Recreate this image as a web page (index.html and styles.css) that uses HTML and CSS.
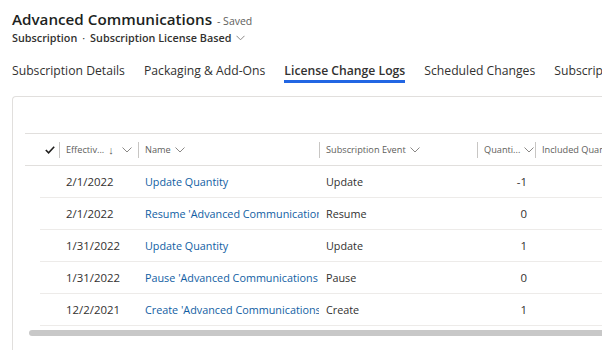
FILE: index.html
```html
<!DOCTYPE html>
<html lang="en">
<head>
    <meta charset="UTF-8">
    <meta name="viewport" content="width=device-width, initial-scale=1.0">
    <title>Advanced Communications</title>
    <link rel="stylesheet" href="styles.css">
</head>
<body>

    <div class="page-header">
        <h1 class="title">Advanced Communications <span class="saved">- Saved</span></h1>
        <div class="breadcrumb">
            <span>Subscription</span>
            <span class="dot">·</span>
            <span>Subscription License Based</span>
            <svg class="chev" width="9" height="6" viewBox="0 0 9 6"><path d="M0.5 0.8 L4.5 4.8 L8.5 0.8" fill="none" stroke="#8a8886" stroke-width="1"/></svg>
        </div>
    </div>

    <nav class="tabs">
        <a class="tab">Subscription Details</a>
        <a class="tab">Packaging &amp; Add-Ons</a>
        <a class="tab active">License Change Logs</a>
        <a class="tab">Scheduled Changes</a>
        <a class="tab">Subscription Products</a>
    </nav>

    <div class="panel">
        <div class="grid">
            <div class="grid-head">
                <div class="col-check">
                    <svg width="10" height="8" viewBox="0 0 10 8"><path d="M0.8 4 L3.6 6.8 L9.2 0.8" fill="none" stroke="#201f1e" stroke-width="1.6"/></svg>
                </div>
                <div class="th col-date">Effectiv... <span class="arrow">↓</span>
                    <svg class="hchev" width="10" height="6" viewBox="0 0 10 6"><path d="M0.5 0.5 L5 5 L9.5 0.5" fill="none" stroke="#8a8886"/></svg>
                </div>
                <div class="th col-name">Name
                    <svg class="hchev" width="10" height="6" viewBox="0 0 10 6"><path d="M0.5 0.5 L5 5 L9.5 0.5" fill="none" stroke="#8a8886"/></svg>
                </div>
                <div class="th col-event">Subscription Event
                    <svg class="hchev" width="10" height="6" viewBox="0 0 10 6"><path d="M0.5 0.5 L5 5 L9.5 0.5" fill="none" stroke="#8a8886"/></svg>
                </div>
                <div class="th col-qty">Quanti...
                    <svg class="hchev" width="10" height="6" viewBox="0 0 10 6"><path d="M0.5 0.5 L5 5 L9.5 0.5" fill="none" stroke="#8a8886"/></svg>
                </div>
                <div class="th col-inc">Included Quantity</div>
            </div>

            <div class="row">
                <div class="cell-gap"></div>
                <div class="td col-date">2/1/2022</div>
                <div class="td col-name"><a>Update Quantity</a></div>
                <div class="td col-event">Update</div>
                <div class="td col-qty">-1</div>
                <div class="td col-inc"></div>
            </div>
            <div class="row">
                <div class="cell-gap"></div>
                <div class="td col-date">2/1/2022</div>
                <div class="td col-name"><a>Resume 'Advanced Communications (Monthly)'</a></div>
                <div class="td col-event">Resume</div>
                <div class="td col-qty">0</div>
                <div class="td col-inc"></div>
            </div>
            <div class="row">
                <div class="cell-gap"></div>
                <div class="td col-date">1/31/2022</div>
                <div class="td col-name"><a>Update Quantity</a></div>
                <div class="td col-event">Update</div>
                <div class="td col-qty">1</div>
                <div class="td col-inc"></div>
            </div>
            <div class="row">
                <div class="cell-gap"></div>
                <div class="td col-date">1/31/2022</div>
                <div class="td col-name"><a>Pause 'Advanced Communications (Monthly)'</a></div>
                <div class="td col-event">Pause</div>
                <div class="td col-qty">0</div>
                <div class="td col-inc"></div>
            </div>
            <div class="row">
                <div class="cell-gap"></div>
                <div class="td col-date">12/2/2021</div>
                <div class="td col-name"><a>Create 'Advanced Communications</a></div>
                <div class="td col-event">Create</div>
                <div class="td col-qty">1</div>
                <div class="td col-inc"></div>
            </div>

            <div class="hscroll"></div>
        </div>
    </div>

</body>
</html>
```

FILE: styles.css
```css
* { margin: 0; padding: 0; box-sizing: border-box; font-family: 'Open Sans', 'Noto Sans', sans-serif; }
body { background: #fff; color: #323130; width: 602px; height: 350px; overflow: hidden; }

.page-header { padding: 8px 12px 0; }
.title { font-size: 15.2px; font-weight: 600; color: #201f1e; line-height: 22px; white-space: nowrap; }
.saved { font-size: 10.5px; font-weight: 400; color: #605e5c; margin-left: 1px; }
.breadcrumb { display: flex; align-items: center; gap: 3px; font-size: 10.8px; line-height: 14px; margin-top: -1px; color: #323130; white-space: nowrap; font-weight: 600; }
.breadcrumb .dot { margin: 0 2px; font-weight: 400; }
.breadcrumb .chev { margin-left: 2px; }

.tabs { display: flex; gap: 19px; padding: 17px 12px 0; white-space: nowrap; overflow: hidden; }
.tab { font-size: 12.2px; line-height: 18px; color: #323130; border-bottom: 3px solid transparent; flex-shrink: 0; }
.tab.active { font-weight: 600; border-bottom-color: #2266e3; }

.panel { margin: 13px 0 0 12px; border-top: 1px solid #e1dfdd; border-left: 1px solid #e1dfdd; border-top-left-radius: 4px; height: 260px; padding-top: 36px; overflow: hidden; }
.grid { margin-left: 12px; }

.grid-head { display: flex; align-items: center; height: 33px; border-top: 1px solid #e1dfdd; border-bottom: 1px solid #e1dfdd; font-size: 9.2px; color: #605e5c; white-space: nowrap; }
.col-check { width: 34px; flex-shrink: 0; display: flex; justify-content: flex-end; padding-right: 4px; }
.th { height: 16px; display: flex; align-items: center; border-left: 1px solid #c8c6c4; padding-left: 6px; flex-shrink: 0; overflow: hidden; }
.th .arrow { margin-left: 4px; font-size: 11px; color: #605e5c; }
.hchev { margin-left: 4px; }
.col-date { width: 79px; }
.col-date .hchev { margin-left: 8px; }
.col-name { width: 181px; }
.col-event { width: 158px; }
.col-qty { width: 58px; }
.col-inc { width: 80px; }

.row { display: flex; align-items: center; height: 32px; margin-left: 15px; border-bottom: 1px solid #edebe9; font-size: 10.8px; white-space: nowrap; }
.cell-gap { width: 19px; flex-shrink: 0; }
.td { flex-shrink: 0; overflow: hidden; text-overflow: clip; padding-left: 7px; color: #323130; }
.row .col-date { font-size: 11.4px; }
.td a { color: #115ea3; }
.row .col-qty { text-align: right; padding-right: 8px; font-size: 11.4px; }

.hscroll { margin: 4px 0 0 4px; height: 6px; background: #c8c8c8; border-radius: 3px 0 0 3px; }
```
